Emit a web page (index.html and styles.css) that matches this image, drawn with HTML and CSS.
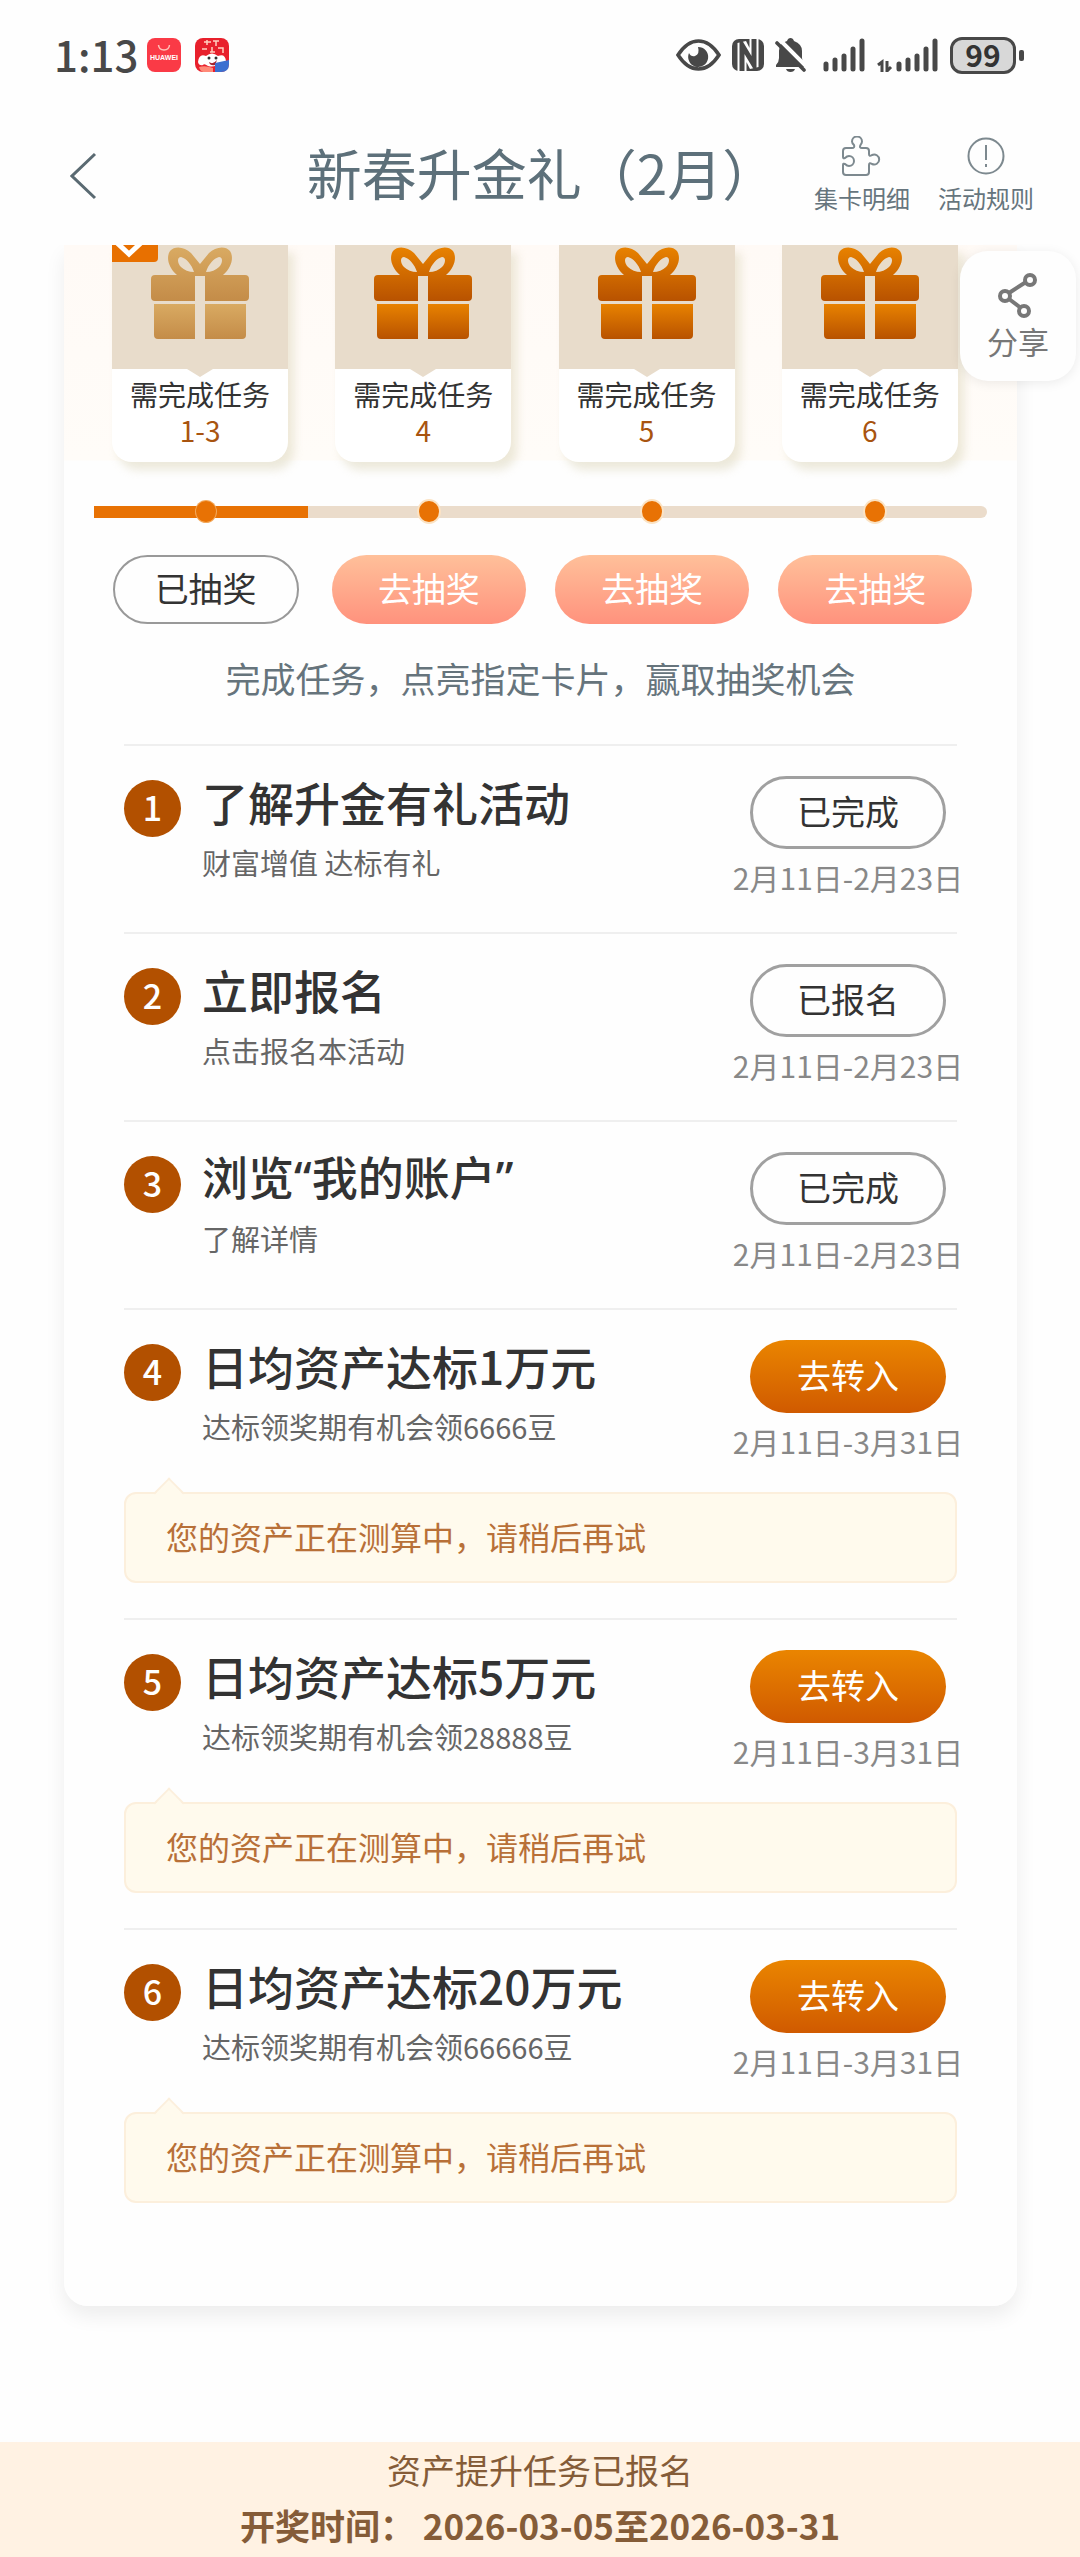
FILE: index.html
```html
<!DOCTYPE html>
<html lang="zh-Hans">
<head>
  <meta charset="UTF-8">
  <meta name="viewport" content="width=device-width, initial-scale=1.0">
  <title>新春升金礼（2月）</title>
  <link rel="stylesheet" href="styles.css">
</head>
<body>
  <svg class="defs" width="0" height="0" aria-hidden="true">
    <defs>
      <linearGradient id="orange" x1="0" y1="0" x2="0" y2="1">
        <stop offset="0" stop-color="#e88200"/>
        <stop offset="1" stop-color="#b85200"/>
      </linearGradient>
      <linearGradient id="tan" x1="0" y1="0" x2="0" y2="1">
        <stop offset="0" stop-color="#d9aa62"/>
        <stop offset="1" stop-color="#c48c48"/>
      </linearGradient>
      <symbol id="gift" viewBox="0 0 98 93">
        <path fill-rule="evenodd" d="M26 28C17 20 15 10 19 4C24-2 34 0 40 6L49 17L58 6C64 0 74-2 79 4C83 10 81 20 72 28H94Q98 28 98 32V50Q98 54 94 54H54V29H44V54H4Q0 54 0 50V32Q0 28 4 28ZM43 25C41 18 35 11 30 10C26 10 26 16 30 20C33 23 38 25 43 25ZM55 25C57 18 63 11 68 10C72 10 72 16 68 20C65 23 60 25 55 25Z"/>
        <path d="M3 57H44V92H7Q3 92 3 88ZM54 57H95V88Q95 92 91 92H54Z"/>
      </symbol>
    </defs>
  </svg>

  <div class="status-bar">
    <span class="time">1:13</span>
    <svg width="34" height="34" viewBox="0 0 34 34">
      <rect width="34" height="34" rx="8" fill="#fa3a46"/>
      <path d="M11.500 7Q12 12 17 12Q22 12 22.500 7" fill="none" stroke="#ffc2b8" stroke-width="1.500"/>
      <text x="17" y="22" class="tiny-logo" text-anchor="middle">HUAWEI</text>
    </svg>
    <svg class="app-icon" width="34" height="34" viewBox="0 0 34 34">
      <rect width="34" height="34" rx="8" fill="#e8202c"/>
      <path d="M9 4H16M12 2V7M18 3H24M21 3V8M7 11H12M15 14H20M17 9V14M23 10H28V15" stroke="#ffd0c0" stroke-width="1.500" fill="none"/>
      <path d="M3 24Q4 15 11 18Q17 13 23 18Q30 15 31 23Q28 27 24 25Q20 30 13 28Q9 25 8 27Q4 28 3 24Z" fill="#fff"/>
      <circle cx="14" cy="20" r="1.500" fill="#333"/><circle cx="21" cy="20" r="1.500" fill="#333"/>
      <path d="M14 24Q18 27 22 22L20 27Q15 28 14 24Z" fill="#a3222b"/>
      <path d="M4 29Q10 27 18 30V34H8Q5 33 4 29Z" fill="#ff8a78"/>
      <path d="M20 25L34 22V26Q34 34 26 34H20Z" fill="#3b6fd0"/>
    </svg>
    <div class="status-right">
      <svg width="45" height="32" viewBox="0 0 45 32">
        <path d="M2 16Q11 2 22.500 2Q34 2 43 16Q34 30 22.500 30Q11 30 2 16Z" fill="none" stroke="#484848" stroke-width="3.600"/>
        <path d="M22 8A10 10 0 1 1 13 14Q15 18 19 17Q24 15 22 8Z" fill="#484848"/>
      </svg>
      <svg width="32" height="32" viewBox="0 0 32 32">
        <rect width="32" height="32" rx="7" fill="#484848"/>
        <path d="M10 34V4L22 28V-2" fill="none" stroke="#fff" stroke-width="9"/>
        <path d="M10 34V6L22 26V-2" fill="none" stroke="#484848" stroke-width="5"/>
      </svg>
      <svg width="31" height="34" viewBox="0 0 31 34">
        <path d="M1 29V27Q4 24 4 20V13Q4 5 12 3Q13 0 15.500 0Q18 0 19 3Q27 6 27 13V20Q27 24 30 27V29Z" fill="#484848"/>
        <path d="M11 31H20Q19 34 15.500 34Q12 34 11 31Z" fill="#484848"/>
        <path d="M4 1L31 28" stroke="#fff" stroke-width="4"/>
        <path d="M2 5L29 32" stroke="#484848" stroke-width="3.600" stroke-linecap="round"/>
      </svg>
      <svg class="signal" width="43" height="34" viewBox="0 0 43 34">
        <path d="M3 26V31M12 22V31M21 18V31M30 11V31M39 3V31"/>
      </svg>
      <svg class="signal" width="62" height="34" viewBox="0 0 62 34">
        <path d="M22 26V31M31 22V31M40 18V31M49 11V31M58 3V31"/>
        <path class="arrows" d="M1 27L5 24V34M10 23V33L14 29"/>
      </svg>
      <div class="battery"><span>99</span></div>
    </div>
  </div>

  <header class="header">
    <button class="back" aria-label="返回">
      <svg width="27" height="48" viewBox="0 0 27 48">
        <path d="M25 2L2 24L25 46" fill="none" stroke="#5a6a72" stroke-width="3"/>
      </svg>
    </button>
    <h1>新春升金礼（2月）</h1>
    <nav class="actions">
      <a href="#cards">
        <svg width="40" height="40" viewBox="0 0 40 40">
          <path d="M4 12H10Q13 12 12 9Q10 7 10 5.500A5 5 0 0 1 20 5.500Q20 7 18.500 9Q17 12 20 12H24Q27 12 27 15V18Q27 21 30 19A5 5 0 1 1 30 28Q27 26 27 29V36Q27 39 24 39H4Q1 39 1 36V29Q1 27 3 28Q5 30 7 30A5 5 0 1 0 7 20Q5 20 3 22Q1 23 1 21V15Q1 12 4 12Z"/>
        </svg>
        <span>集卡明细</span>
      </a>
      <a href="#rules">
        <svg width="40" height="40" viewBox="0 0 40 40">
          <circle cx="20" cy="20" r="17.500"/>
          <path d="M20 9V24M20 28V31"/>
        </svg>
        <span>活动规则</span>
      </a>
    </nav>
  </header>

  <button class="share">
    <svg width="40" height="46" viewBox="0 0 40 46">
      <path d="M11 21L28 10M11 27L23 36"/>
      <circle cx="32" cy="8" r="5"/><circle cx="7" cy="24" r="5"/><circle cx="26" cy="39" r="5"/>
    </svg>
    分享
  </button>

  <main class="panel">
    <section class="lottery">
      <div class="prizes">
        <div class="prize">
          <div class="prize-img">
            <span class="badge"><svg width="46" height="17" viewBox="0 0 46 17"><path d="M3 -4L17 9L31 -4" fill="none" stroke="#fff" stroke-width="5"/></svg></span>
            <svg class="gift" fill="url(#tan)"><use href="#gift"/></svg>
          </div>
          <p>需完成任务<b>1-3</b></p>
        </div>
        <div class="prize">
          <div class="prize-img"><svg class="gift" fill="url(#orange)"><use href="#gift"/></svg></div>
          <p>需完成任务<b>4</b></p>
        </div>
        <div class="prize">
          <div class="prize-img"><svg class="gift" fill="url(#orange)"><use href="#gift"/></svg></div>
          <p>需完成任务<b>5</b></p>
        </div>
        <div class="prize">
          <div class="prize-img"><svg class="gift" fill="url(#orange)"><use href="#gift"/></svg></div>
          <p>需完成任务<b>6</b></p>
        </div>
      </div>

      <div class="steps">
        <div class="track"><div class="fill"></div></div>
        <div class="dots"><i></i><i></i><i></i><i></i></div>
      </div>

      <div class="draws">
        <button class="draw drawn">已抽奖</button>
        <button class="draw">去抽奖</button>
        <button class="draw">去抽奖</button>
        <button class="draw">去抽奖</button>
      </div>
      <p class="hint">完成任务，点亮指定卡片，赢取抽奖机会</p>
    </section>

    <ul class="tasks">
      <li class="task">
        <div class="row">
          <span class="num">1</span>
          <div class="info">
            <h2>了解升金有礼活动</h2>
            <p>财富增值 达标有礼</p>
          </div>
          <div class="side">
            <button class="btn">已完成</button>
            <span class="date">2月11日-2月23日</span>
          </div>
        </div>
      </li>
      <li class="task">
        <div class="row">
          <span class="num">2</span>
          <div class="info">
            <h2>立即报名</h2>
            <p>点击报名本活动</p>
          </div>
          <div class="side">
            <button class="btn">已报名</button>
            <span class="date">2月11日-2月23日</span>
          </div>
        </div>
      </li>
      <li class="task">
        <div class="row">
          <span class="num">3</span>
          <div class="info">
            <h2 class="quoted">浏览“我的账户”</h2>
            <p>了解详情</p>
          </div>
          <div class="side">
            <button class="btn">已完成</button>
            <span class="date">2月11日-2月23日</span>
          </div>
        </div>
      </li>
      <li class="task">
        <div class="row">
          <span class="num">4</span>
          <div class="info">
            <h2>日均资产达标1万元</h2>
            <p>达标领奖期有机会领6666豆</p>
          </div>
          <div class="side">
            <button class="btn go">去转入</button>
            <span class="date">2月11日-3月31日</span>
          </div>
        </div>
        <div class="tip">您的资产正在测算中，请稍后再试</div>
      </li>
      <li class="task">
        <div class="row">
          <span class="num">5</span>
          <div class="info">
            <h2>日均资产达标5万元</h2>
            <p>达标领奖期有机会领28888豆</p>
          </div>
          <div class="side">
            <button class="btn go">去转入</button>
            <span class="date">2月11日-3月31日</span>
          </div>
        </div>
        <div class="tip">您的资产正在测算中，请稍后再试</div>
      </li>
      <li class="task">
        <div class="row">
          <span class="num">6</span>
          <div class="info">
            <h2>日均资产达标20万元</h2>
            <p>达标领奖期有机会领66666豆</p>
          </div>
          <div class="side">
            <button class="btn go">去转入</button>
            <span class="date">2月11日-3月31日</span>
          </div>
        </div>
        <div class="tip">您的资产正在测算中，请稍后再试</div>
      </li>
    </ul>
  </main>

  <footer class="footer">
    <p>资产提升任务已报名</p>
    <p><strong>开奖时间： 2026-03-05至2026-03-31</strong></p>
  </footer>
</body>
</html>
```

FILE: styles.css
```css
* {
  box-sizing: border-box;
}
body {
  margin: 0;
  background: #fefefe;
  color: #333;
  font-family: "Noto Sans CJK SC", sans-serif;
}
h1, h2, p, ul {
  margin: 0;
  padding: 0;
}
button {
  margin: 0;
  padding: 0;
  border: none;
  background: none;
  font-family: inherit;
  cursor: pointer;
}
a {
  color: inherit;
  text-decoration: none;
}
.defs {
  position: absolute;
}

/* status bar */
.status-bar {
  display: flex;
  align-items: center;
  height: 110px;
  padding: 0 64px 0 54px;
}
.time {
  padding-bottom: 4px;
  font-size: 42px;
  font-weight: 500;
  color: #484848;
  margin-right: 9px;
}
.app-icon {
  margin-left: 14px;
}
.tiny-logo {
  font: bold 7px "Liberation Sans", sans-serif;
  fill: #fff;
}
.status-right {
  display: flex;
  align-items: center;
  gap: 11px;
  margin-left: auto;
}
.signal {
  fill: none;
  stroke: #484848;
  stroke-width: 5;
  stroke-linecap: round;
}
.signal:nth-of-type(4) {
  margin-left: 6px;
}
.signal .arrows {
  stroke-width: 3;
  stroke-linecap: butt;
}
.battery {
  position: relative;
  width: 66px;
  height: 37px;
  border: 3px solid #484848;
  border-radius: 12px;
  background: #d8d8d8;
  color: #333;
  font-size: 30px;
  font-weight: 700;
  line-height: 29px;
  text-align: center;
}
.battery::after {
  content: "";
  position: absolute;
  right: -11px;
  top: 10px;
  width: 5px;
  height: 11px;
  border-radius: 2px;
  background: #484848;
}

/* header */
.header {
  display: grid;
  grid-template-columns: 1fr auto 1fr;
  align-items: center;
  height: 135px;
  padding: 0 46px 4px 70px;
  color: #5d707a;
}
.header h1 {
  font-size: 55px;
  font-weight: 400;
  line-height: 72px;
  padding: 0 0 10px 26px;
  margin-right: 46px;
  white-space: nowrap;
}
.back {
  justify-self: start;
  height: 48px;
}
.actions {
  display: flex;
  justify-content: flex-end;
  gap: 28px;
  margin-left: -60px;
}
.actions a {
  display: flex;
  flex-direction: column;
  align-items: center;
  font-size: 24px;
  line-height: 36px;
  color: #66757d;
  white-space: nowrap;
}
.actions svg {
  margin-bottom: 4px;
  fill: none;
  stroke: #7d898f;
  stroke-width: 2;
}

.share {
  position: absolute;
  z-index: 10;
  top: 251px;
  right: 4px;
  display: flex;
  flex-direction: column;
  align-items: center;
  width: 116px;
  height: 130px;
  padding-top: 21px;
  border-radius: 28px;
  background: #fefefe;
  box-shadow: 0 2px 12px rgba(0, 0, 0, 0.08);
  font-size: 31px;
  line-height: 46px;
  color: #777;
}
.share svg {
  fill: none;
  stroke: #777;
  stroke-width: 4;
}

/* main panel */
.panel {
  margin: 0 63px 136px 64px;
  padding-bottom: 68px;
  border-radius: 0 0 24px 24px;
  background: linear-gradient(#fffaf6, #fffcf8 215px, #fefefe 216px);
  box-shadow: 0 10px 20px rgba(0, 0, 0, 0.07);
  clip-path: inset(0 -40px -60px -40px);
}
.lottery {
  padding: 0 30px;
}
.prizes,
.dots,
.draws {
  display: grid;
  grid-template-columns: repeat(4, 1fr);
  justify-items: center;
}
.prize {
  width: 176px;
  margin-right: 11px;
  border-radius: 0 0 20px 20px;
  background: #fff;
  box-shadow: 6px 8px 10px rgba(214, 208, 178, 0.45);
}
.prize-img {
  position: relative;
  height: 124px;
  padding-top: 2px;
  background: #e8dccb;
  text-align: center;
}
.prize-img::after {
  content: "";
  position: absolute;
  left: 50%;
  top: 100%;
  margin-left: -13px;
  border: 13px solid transparent;
  border-top: 8px solid #e8dccb;
  border-bottom: 0;
}
.gift {
  width: 98px;
  height: 93px;
}
.badge {
  position: absolute;
  left: 0;
  top: 0;
  height: 17px;
  border-radius: 0 0 4px 0;
  background: #e87000;
  line-height: 0;
}
.prize p {
  height: 93px;
  padding-top: 7px;
  font-size: 28px;
  line-height: 36px;
  text-align: center;
}
.prize b {
  display: block;
  font-weight: 400;
  color: #a85410;
}

.steps {
  display: grid;
  align-items: center;
  margin-top: 39px;
}
.track,
.dots {
  grid-area: 1 / 1;
}
.track {
  height: 12px;
  border-radius: 0 6px 6px 0;
  background: #ebdccb;
}
.fill {
  width: 24%;
  height: 12px;
  background: #e87204;
}
.dots i {
  width: 20px;
  height: 21px;
  border-radius: 50%;
  background: #e87204;
  box-shadow: 0 0 0 2px #fbe3c4;
}
.dots i:first-child {
  box-shadow: 0 0 0 1px #f3a95c;
}

.draws {
  margin-top: 33px;
}
.draw {
  width: 194px;
  height: 69px;
  padding-bottom: 4px;
  border-radius: 35px;
  background: linear-gradient(#ffc09a, #ff927d);
  color: #fff;
  font-size: 34px;
}
.drawn {
  width: 186px;
  border: 2px solid #999;
  background: #fefefe;
  color: #333;
}
.hint {
  margin: 30px 0 42px;
  font-size: 35px;
  line-height: 48px;
  text-align: center;
  color: #66747c;
}

/* task list */
.tasks {
  padding: 0 60px;
  list-style: none;
}
.task {
  padding: 30px 0 35px;
  border-top: 2px solid #efefef;
}
.row {
  display: flex;
}
.num {
  flex: none;
  width: 57px;
  height: 57px;
  margin: 4px 21px 0 0;
  border-radius: 50%;
  background: #b25000;
  color: #fff;
  font-size: 34px;
  font-weight: 500;
  line-height: 54px;
  text-align: center;
}
.info {
  flex: 1;
}
.info h2 {
  font-size: 46px;
  font-weight: 500;
  line-height: 50px;
  white-space: nowrap;
}
/* narrow latin quotes instead of the full-width ones */
.info .quoted {
  font-family: "Noto Sans", "Noto Sans CJK SC", sans-serif;
}
.info p {
  margin-top: 18px;
  font-size: 29px;
  line-height: 36px;
  color: #666;
}
.side {
  display: flex;
  flex-direction: column;
  align-items: center;
  width: 218px;
}
.btn {
  width: 196px;
  height: 73px;
  margin-bottom: 11px;
  padding-bottom: 4px;
  border: 3px solid #a0a0a0;
  border-radius: 37px;
  color: #333;
  font-size: 34px;
}
.go {
  border: none;
  background: linear-gradient(#ea8500, #d05a00);
  color: #fff;
}
.date {
  margin-bottom: 3px;
  font-size: 30px;
  line-height: 34px;
  color: #888;
  white-space: nowrap;
}
.tip {
  position: relative;
  margin-top: 31px;
  padding: 20px 40px 22px;
  border: 2px solid #fcefdc;
  border-radius: 12px;
  background: #fffaed;
  font-size: 32px;
  line-height: 45px;
  color: #b87038;
}
.tip::before {
  content: "";
  position: absolute;
  left: 32px;
  top: -12px;
  width: 20px;
  height: 20px;
  border: 2px solid #fcefdc;
  border-right: none;
  border-bottom: none;
  background: linear-gradient(135deg, #fffaed 50%, transparent 50%);
  transform: rotate(45deg);
}

.footer {
  padding: 0 0 5px;
  background: #fff2e3;
  font-size: 34px;
  line-height: 55px;
  text-align: center;
  color: #855c38;
}
.footer strong {
  font-size: 35px;
}
```
